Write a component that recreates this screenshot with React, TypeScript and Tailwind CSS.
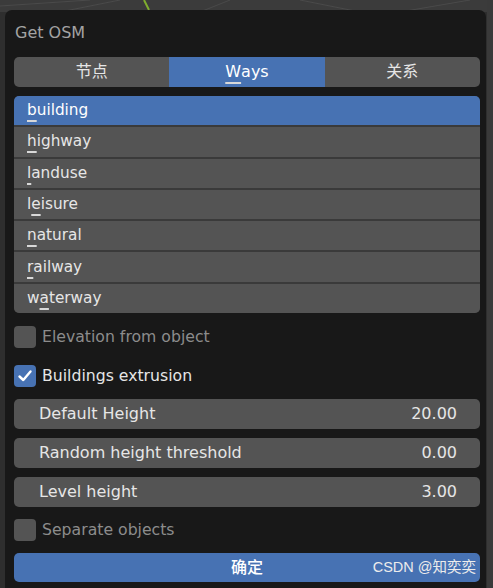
// Blender-style "Get OSM" popup panel

const font = { fontFamily: '"DejaVu Sans", "Noto Sans CJK SC", sans-serif' }

const ways = [
  { pre: '', key: 'b', rest: 'uilding' },
  { pre: '', key: 'h', rest: 'ighway' },
  { pre: '', key: 'l', rest: 'anduse' },
  { pre: 'l', key: 'e', rest: 'isure' },
  { pre: '', key: 'n', rest: 'atural' },
  { pre: '', key: 'r', rest: 'ailway' },
  { pre: 'w', key: 'a', rest: 'terway' },
]

const fields = [
  { label: 'Default Height', value: '20.00' },
  { label: 'Random height threshold', value: '0.00' },
  { label: 'Level height', value: '3.00' },
]

function Key({ children }: { children: string }) {
  return (
    <span className="underline decoration-2 underline-offset-[5px] decoration-[#d8d8d8]">{children}</span>
  )
}

function Checkbox({ label, checked, dim }: { label: string; checked?: boolean; dim?: boolean }) {
  return (
    <div className="flex h-[22px] items-center gap-[6px]">
      <div
        className={
          'flex h-[22px] w-[22px] items-center justify-center rounded-[4px] ' +
          (checked ? 'bg-[#4772b3]' : 'bg-[#545454]')
        }
      >
        {checked && (
          <svg width="16" height="16" viewBox="0 0 16 16">
            <path d="M2.5 8.5 L6.3 12 L13.5 3.5" fill="none" stroke="#ffffff" strokeWidth="2.4" strokeLinecap="round" strokeLinejoin="round" />
          </svg>
        )}
      </div>
      <span className={'text-[15.7px] ' + (dim ? 'text-[#8c8c8c]' : 'text-[#e6e6e6]')}>{label}</span>
    </div>
  )
}

function Backdrop() {
  return (
    <svg className="absolute inset-0" width="493" height="588" viewBox="0 0 493 588">
      <rect width="493" height="588" fill="#2e2e2e" />
      <rect width="493" height="12" fill="#3b3b3b" />
      <path d="M0 6 L90 0 M60 12 L120 0 M200 12 L230 0 M300 0 L360 12 M400 12 L470 0" stroke="#4a4a4a" strokeWidth="1" />
      <path d="M144 0 L149 10" stroke="#7fae2e" strokeWidth="2" />
      <rect x="487" y="0" width="6" height="588" fill="#3a3a3a" />
    </svg>
  )
}

export default function App() {
  return (
    <div className="relative h-[588px] w-[493px] overflow-hidden" style={font}>
      <Backdrop />
      <div className="relative ml-[5px] mt-[10px] flex h-[590px] w-[481px] flex-col rounded-t-[7px] bg-[#181818] pl-[9px] pr-[6px]">
        <div className="flex h-[47px] items-center pb-[1px] pl-[1px] text-[16px] text-[#a3a3a3]">Get OSM</div>

        {/* tabs */}
        <div className="flex h-[30px] overflow-hidden rounded-[5px] bg-[#545454] text-[16px] text-[#e6e6e6]">
          <div className="flex flex-1 items-center justify-center">节点</div>
          <div className="flex flex-1 items-center justify-center bg-[#4772b3] text-white">
            <Key>W</Key>ays
          </div>
          <div className="flex flex-1 items-center justify-center">关系</div>
        </div>

        {/* ways list */}
        <div className="mt-[9px] flex h-[217px] flex-col gap-[2px] overflow-hidden rounded-[5px] bg-[#3a3a3a]">
          {ways.map((w, i) => (
            <div
              key={w.key + w.rest}
              className={
                'flex flex-1 items-center pl-[13px] text-[15.3px] text-[#e6e6e6] ' +
                (i === 0 ? 'bg-[#4772b3] text-white' : 'bg-[#545454]')
              }
            >
              {w.pre}
              <Key>{w.key}</Key>
              {w.rest}
            </div>
          ))}
        </div>

        <div className="mt-[13px] flex flex-col gap-[17px]">
          <Checkbox label="Elevation from object" dim />
          <Checkbox label="Buildings extrusion" checked />
        </div>

        {/* number fields */}
        <div className="mt-[12px] flex flex-col gap-[9px]">
          {fields.map((f) => (
            <div
              key={f.label}
              className="flex h-[30px] items-center justify-between rounded-[5px] bg-[#545454] pl-[25px] pr-[23px] text-[16px] text-[#e6e6e6]"
            >
              <span>{f.label}</span>
              <span>{f.value}</span>
            </div>
          ))}
        </div>

        <div className="mt-[12px]">
          <Checkbox label="Separate objects" dim />
        </div>

        <div className="relative mt-[12px] flex h-[29px] items-center justify-center rounded-[5px] bg-[#4772b3] text-[16px] font-medium text-white">
          确定
          <span className="absolute right-[4px] text-[14.5px] font-normal text-[#ececec]" style={{ fontFamily: '"Liberation Sans", "Noto Sans CJK SC", sans-serif' }}>
            CSDN @知奕奕
          </span>
        </div>
      </div>
    </div>
  )
}
